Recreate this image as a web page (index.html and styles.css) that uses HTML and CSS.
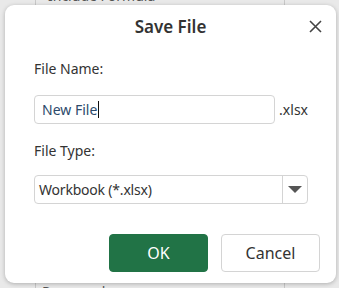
FILE: index.html
```html
<!DOCTYPE html>
<html lang="en">
  <head>
    <meta charset="UTF-8" />
    <meta name="viewport" content="width=device-width, initial-scale=1.0" />
    <title>Save File</title>
    <link rel="stylesheet" href="styles.css">
  </head>
  <body>
    <div class="sheet">
      <div class="sheet-col">
        <span class="sheet-top">Include Formula</span>
        <span class="sheet-bottom">Password</span>
      </div>
    </div>

    <div class="dialog">
      <div class="dialog-header">
        <h2>Save File</h2>
        <button type="button" class="close" aria-label="Close">
          <svg width="13" height="13" viewBox="0 0 13 13">
            <path d="M1 1L12 12M12 1L1 12" stroke="#444" stroke-width="1.6" fill="none" />
          </svg>
        </button>
      </div>

      <form class="dialog-body">
        <label for="fileName">File Name:</label>
        <div class="name-row">
          <div class="text-input">New File<span class="caret"></span></div>
          <span class="ext">.xlsx</span>
        </div>

        <label for="fileType">File Type:</label>
        <div class="select">
          <span class="select-value">Workbook (*.xlsx)</span>
          <span class="select-arrow">
            <svg width="14" height="8" viewBox="0 0 14 8">
              <path d="M0 0H14L7 7Z" fill="#555" />
            </svg>
          </span>
        </div>

        <div class="buttons">
          <button type="button" class="btn btn-primary">OK</button>
          <button type="button" class="btn">Cancel</button>
        </div>
      </form>
    </div>
  </body>
</html>
```

FILE: styles.css
```css
body {
  margin: 0;
  width: 339px;
  height: 288px;
  overflow: hidden;
  background-color: #e9e9e9;
  font-family: "Noto Sans", "Open Sans", Arial, sans-serif;
  position: relative;
}
.sheet {
  height: 288px;
  padding-left: 35px;
}
.sheet-col {
  width: 248px;
  height: 288px;
  border-left: 1px solid #c8c8c8;
  border-right: 1px solid #c8c8c8;
  display: flex;
  flex-direction: column;
  justify-content: space-between;
  font-size: 14px;
  line-height: 16px;
  color: #555;
}
.sheet-top {
  margin-top: -12px;
  padding-left: 12px;
}
.sheet-bottom {
  margin-bottom: -12px;
  padding-left: 6px;
}
.dialog {
  position: absolute;
  left: 5px;
  top: 5px;
  width: 331px;
  height: 278px;
  box-sizing: border-box;
  background: #fff;
  border-radius: 9px;
  box-shadow: 0 1px 4px rgba(0, 0, 0, 0.25);
}
.dialog-header {
  position: relative;
  height: 46px;
  display: flex;
  justify-content: center;
  align-items: center;
}
.dialog-header h2 {
  margin: 0;
  margin-top: -3px;
  font-size: 17px;
  font-weight: 600;
  color: #333;
}
.close {
  position: absolute;
  right: 14px;
  top: 15px;
  background: none;
  border: none;
  padding: 0;
  width: 13px;
  height: 13px;
  display: flex;
}
.dialog-body {
  padding: 10px 28px 0 29px;
  display: flex;
  flex-direction: column;
}
label {
  font-size: 14px;
  color: #333;
  line-height: 20px;
  margin-top: -2px;
}
.name-row {
  margin-top: 16px;
  display: flex;
  align-items: center;
}
.text-input {
  width: 246px;
  height: 29px;
  box-sizing: border-box;
  border: 1px solid #d4d4d4;
  border-radius: 4px;
  padding: 0 7px;
  font-size: 14px;
  color: #2d4a6b;
  display: flex;
  align-items: center;
}
.caret {
  display: inline-block;
  width: 1px;
  height: 17px;
  background: #111;
  margin-left: 1px;
}
.ext {
  margin-left: 4px;
  font-size: 14px;
  color: #333;
}
.name-row + label {
  margin-top: 17px;
}
.select {
  margin-top: 14px;
  width: 274px;
  height: 29px;
  box-sizing: border-box;
  border: 1px solid #d4d4d4;
  border-radius: 4px;
  display: flex;
  align-items: center;
  font-size: 14px;
  color: #333;
}
.select-value {
  flex: 1;
  padding-left: 4px;
  letter-spacing: -0.2px;
}
.select-arrow {
  width: 24px;
  height: 100%;
  border-left: 1px solid #d4d4d4;
  display: flex;
  justify-content: center;
  align-items: center;
}
.buttons {
  margin-top: 30px;
  display: flex;
  justify-content: flex-end;
  gap: 13px;
  margin-right: -12px;
}
.btn {
  width: 99px;
  height: 38px;
  border: 1px solid #d4d4d4;
  border-radius: 4px;
  background: #fff;
  font-family: inherit;
  font-size: 16px;
  color: #333;
}
.btn-primary {
  background-color: #217346;
  border-color: #217346;
  color: #fff;
}
```
